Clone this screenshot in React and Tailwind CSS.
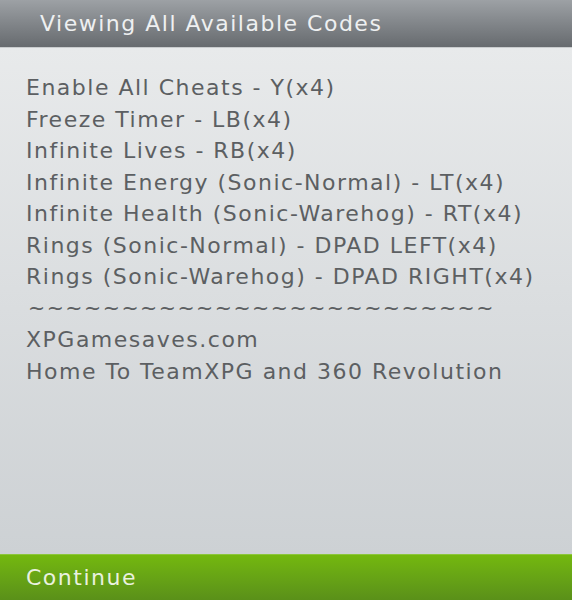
import React from 'react';

const codes = [
  'Enable All Cheats - Y(x4)',
  'Freeze Timer - LB(x4)',
  'Infinite Lives - RB(x4)',
  'Infinite Energy (Sonic-Normal) - LT(x4)',
  'Infinite Health (Sonic-Warehog) - RT(x4)',
  'Rings (Sonic-Normal) - DPAD LEFT(x4)',
  'Rings (Sonic-Warehog) - DPAD RIGHT(x4)',
];

const footerLines = ['XPGamesaves.com', 'Home To TeamXPG and 360 Revolution'];

const App = () => {
  return (
    <div className="w-[572px] h-[600px] flex flex-col overflow-hidden font-['DejaVu_Sans',sans-serif] tracking-[1.5px]">
      <div className="h-[47px] shrink-0 bg-gradient-to-b from-[#9da1a5] to-[#676b6f] flex items-center pl-[40px] text-[22px] text-[#eef0f1]">
        Viewing All Available Codes
      </div>
      <div className="flex-1 border-t border-[#c9ccce] bg-gradient-to-b from-[#e8eaeb] to-[#cdd1d4] pt-[24px] pl-[26px] text-[#5c5f62]">
        {codes.map((line, i) => (
          <div key={i} className="h-[31.5px] leading-[31.5px] text-[22px] whitespace-nowrap">
            {line}
          </div>
        ))}
        <div className="h-[31.5px] leading-[31.5px] text-[20.5px] pl-[2px] whitespace-nowrap">
          ~~~~~~~~~~~~~~~~~~~~~~~~~
        </div>
        {footerLines.map((line, i) => (
          <div key={i} className="h-[31.5px] leading-[31.5px] text-[22px] whitespace-nowrap">
            {line}
          </div>
        ))}
      </div>
      <div className="h-[46px] shrink-0 border-t border-[#8cc63a] bg-gradient-to-b from-[#74b80e] to-[#5a9019] flex items-center pl-[26px] text-[22px] text-[#e9f1df]">
        Continue
      </div>
    </div>
  );
};

export default App;
